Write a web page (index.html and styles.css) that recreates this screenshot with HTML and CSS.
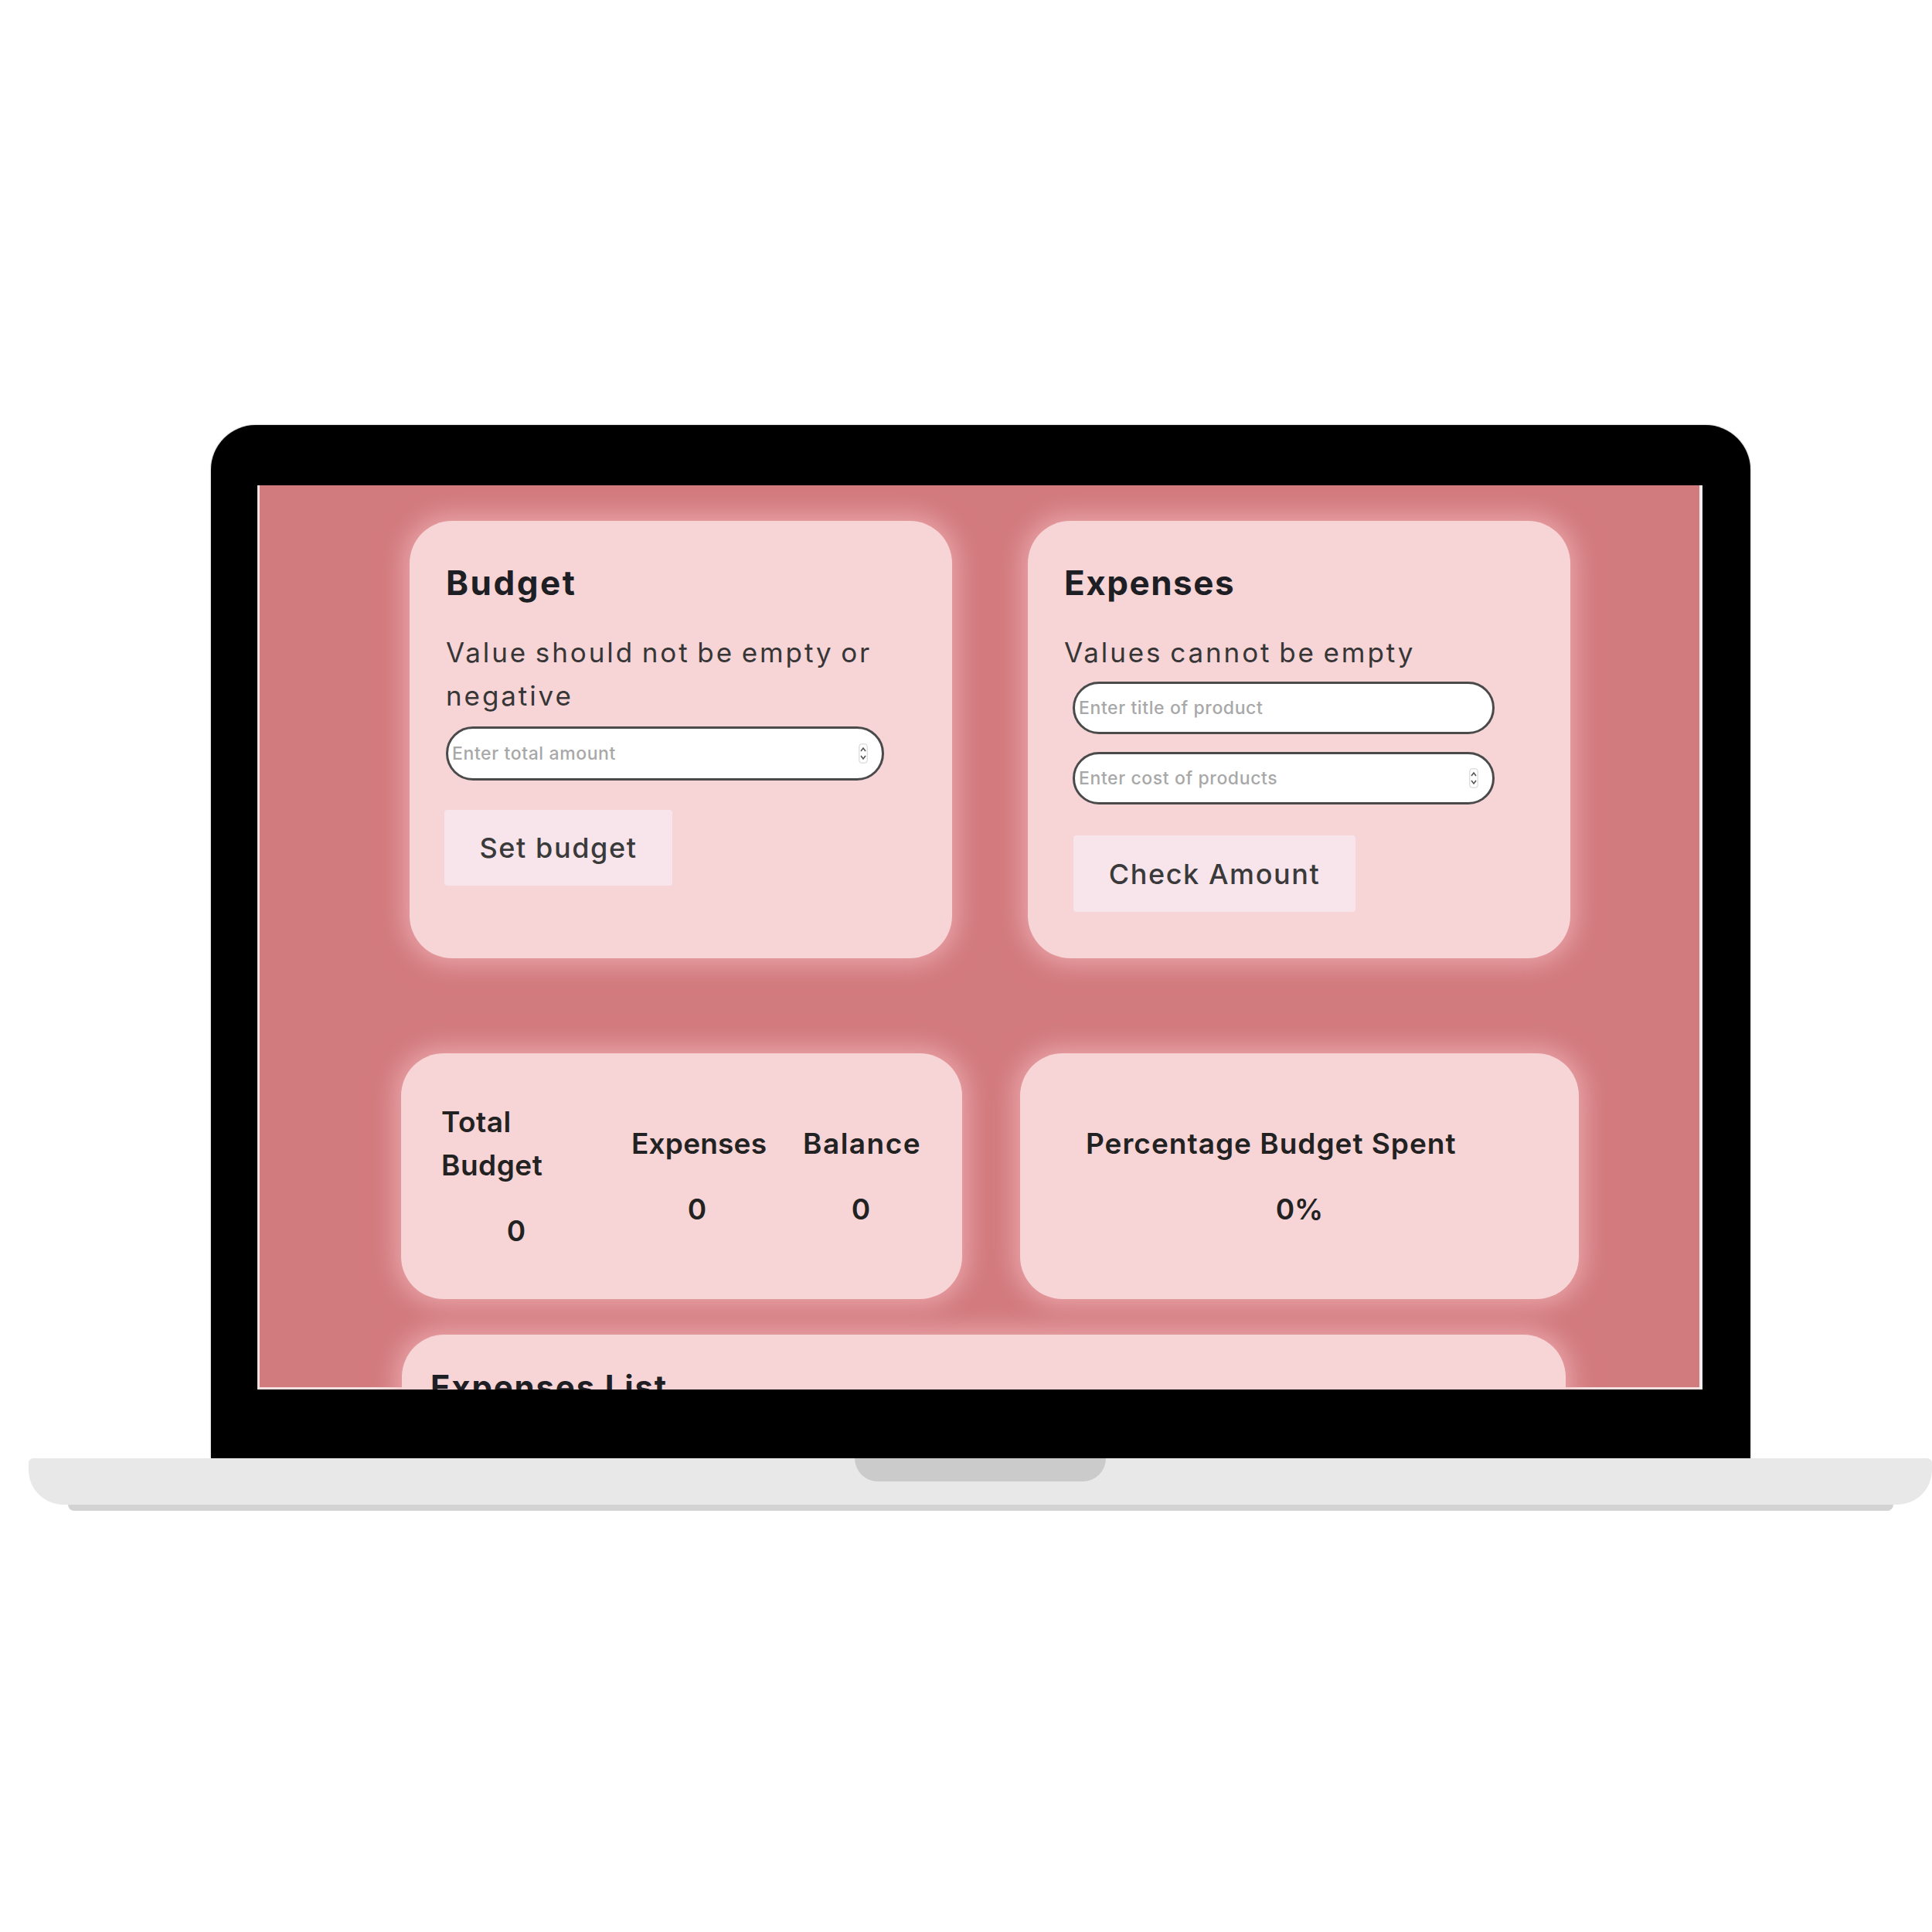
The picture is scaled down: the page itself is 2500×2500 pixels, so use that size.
FILE: index.html
```html
<!DOCTYPE html>
<html lang="en">
<head>
<meta charset="utf-8">
<title>Budget App</title>
<link rel="stylesheet" href="styles.css">
</head>
<body>
<div class="stage">
  <div class="lid">
    <div class="screen">
      <div class="row row-top">
        <section class="card card-form card-budget">
          <h2 class="card-title">Budget</h2>
          <p class="card-msg">Value should not be empty or negative</p>
          <div class="field field-budget">
            <input class="field-input" type="text" placeholder="Enter total amount">
            <svg class="spin" viewBox="0 0 12 26" width="12" height="26"><rect x="0.8" y="0.8" width="10.4" height="24.4" rx="3" fill="none" stroke="#d0d0d0" stroke-width="1"/><path d="M3 10 L6 6 L9 10" fill="none" stroke="#555" stroke-width="1.6"/><path d="M3 16 L6 20 L9 16" fill="none" stroke="#555" stroke-width="1.6"/></svg>
          </div>
          <button class="btn btn-budget">Set budget</button>
        </section>
        <section class="card card-form card-expense">
          <h2 class="card-title">Expenses</h2>
          <p class="card-msg">Values cannot be empty</p>
          <div class="field field-expense">
            <input class="field-input" type="text" placeholder="Enter title of product">
          </div>
          <div class="field field-expense field-cost">
            <input class="field-input" type="text" placeholder="Enter cost of products">
            <svg class="spin" viewBox="0 0 12 26" width="12" height="26"><rect x="0.8" y="0.8" width="10.4" height="24.4" rx="3" fill="none" stroke="#d0d0d0" stroke-width="1"/><path d="M3 10 L6 6 L9 10" fill="none" stroke="#555" stroke-width="1.6"/><path d="M3 16 L6 20 L9 16" fill="none" stroke="#555" stroke-width="1.6"/></svg>
          </div>
          <button class="btn btn-expense">Check Amount</button>
        </section>
      </div>
      <div class="row row-mid">
        <section class="card card-summary">
          <div class="stat stat-total">
            <h3 class="stat-label">Total Budget</h3>
            <p class="stat-value">0</p>
          </div>
          <div class="stat stat-expenses">
            <h3 class="stat-label">Expenses</h3>
            <p class="stat-value">0</p>
          </div>
          <div class="stat stat-balance">
            <h3 class="stat-label">Balance</h3>
            <p class="stat-value">0</p>
          </div>
        </section>
        <section class="card card-percent">
          <h3 class="stat-label percent-label">Percentage Budget Spent</h3>
          <p class="stat-value percent-value">0%</p>
        </section>
      </div>
      <section class="card card-list">
        <h3 class="list-title">Expenses List</h3>
      </section>
    </div>
  </div>
  <div class="base"><div class="notch"></div></div>
  <div class="base-shadow"></div>
</div>
</body>
</html>
```

FILE: styles.css
```css
* { box-sizing: border-box; }

html, body {
  margin: 0;
  padding: 0;
  background: #ffffff;
}

body {
  width: 2500px;
  height: 2500px;
  overflow: hidden;
  font-family: "Inter", "Open Sans", sans-serif;
  color: #222;
}

.stage {
  padding-top: 550px;
}

/* ---------- laptop ---------- */
.lid {
  margin-left: 273px;
  width: 1992px;
  height: 1337px;
  background: #000;
  border-radius: 58px 58px 0 0;
  padding: 78px 62px 89px 60px;
  box-shadow: 0 0 2px rgba(0,0,0,0.5);
}

.screen {
  width: 1870px;
  height: 1170px;
  background: #d27b7f;
  overflow: hidden;
  box-shadow: inset 3px 0 0 #f1dfe0, inset -4px 0 0 #f6eeee, inset 0 -3px 0 #f1dfe0;
  display: flex;
  flex-direction: column;
  align-items: flex-start;
}

.base {
  margin-left: 37px;
  width: 2463px;
  height: 60px;
  background: #e8e8e8;
  border-radius: 6px 6px 45px 45px;
  display: flex;
  justify-content: center;
}

.notch {
  width: 325px;
  height: 30px;
  background: #cbcbcb;
  border-radius: 0 0 30px 30px;
}

.base-shadow {
  margin-left: 88px;
  width: 2362px;
  height: 8px;
  background: #d3d3d3;
  border-radius: 0 0 8px 8px;
}

/* ---------- app ---------- */
.row {
  display: flex;
}

.row-top {
  margin-top: 46px;
  padding-left: 197px;
  gap: 98px;
}

.row-mid {
  margin-top: 123px;
  padding-left: 186px;
  gap: 75px;
}

.card {
  background: #f7d4d6;
  border-radius: 55px;
  box-shadow: 0 0 30px 8px rgba(246, 186, 190, 0.65);
}

.card-form {
  width: 702px;
  height: 566px;
  padding: 50px 0 0 47px;
  display: flex;
  flex-direction: column;
  align-items: flex-start;
}

.card-title {
  margin: 0;
  font-size: 44px;
  line-height: 60px;
  font-weight: 700;
  letter-spacing: 1.5px;
  color: #1e1f24;
}

.card-budget .card-title {
  letter-spacing: 2.5px;
}

.card-msg {
  margin: 32px 0 0;
  width: 610px;
  font-size: 35px;
  line-height: 56px;
  font-weight: 400;
  letter-spacing: 2.9px;
  word-spacing: -3px;
  color: #363636;
}

.field {
  position: relative;
  height: 70px;
  background: #fff;
  border: 3px solid #4a4a4a;
  border-radius: 35px;
  display: flex;
  align-items: center;
}

.field-budget {
  width: 567px;
  margin-top: 12px;
}

.field-expense {
  width: 546px;
  height: 68px;
  margin-top: 10px;
  margin-left: 11px;
}

.field-cost {
  margin-top: 23px;
}

.field-input {
  flex: 1;
  min-width: 0;
  height: 100%;
  border: 0;
  outline: 0;
  background: transparent;
  padding: 0 0 0 5px;
  font-family: inherit;
  font-size: 23px;
  letter-spacing: 0.6px;
  color: #333;
}

.field-input::placeholder {
  color: #a8a8a8;
  font-weight: 500;
}

.spin {
  flex: none;
  margin-right: 18px;
}

.btn {
  border: 0;
  border-radius: 4px;
  background: #f8e5ec;
  font-family: inherit;
  font-size: 36px;
  font-weight: 500;
  color: #3a3a3a;
  letter-spacing: 1.6px;
  padding: 0;
}

.btn-budget {
  width: 295px;
  height: 98px;
  margin-top: 38px;
  margin-left: -2px;
}

.btn-expense {
  width: 365px;
  height: 99px;
  margin-top: 40px;
  margin-left: 12px;
}

/* ---------- summary ---------- */
.card-summary {
  width: 726px;
  height: 318px;
  padding-left: 52px;
  display: flex;
  align-items: center;
  gap: 52px;
}

.stat {
  display: flex;
  flex-direction: column;
}

.stat-total { width: 194px; }
.stat-expenses { width: 170px; text-align: center; }
.stat-balance { width: 150px; text-align: center; }

.stat-label {
  margin: 0;
  font-size: 37px;
  line-height: 56px;
  font-weight: 600;
  letter-spacing: 0.5px;
  color: #222;
}

.stat-expenses .stat-label {
  letter-spacing: 0.2px;
}

.stat-balance .stat-label {
  letter-spacing: 1.5px;
}

.stat-value {
  margin: 29px 0 0;
  font-size: 37px;
  line-height: 56px;
  font-weight: 600;
  text-align: center;
  color: #222;
}

.card-percent {
  width: 723px;
  height: 318px;
  display: flex;
  flex-direction: column;
  justify-content: center;
}

.percent-label {
  padding-left: 85px;
  letter-spacing: 1px;
}

.card-list {
  margin-top: 46px;
  margin-left: 187px;
  width: 1506px;
  height: 300px;
  flex: none;
  padding: 40px 0 0 37px;
}

.list-title {
  margin: 0;
  font-size: 42px;
  line-height: 56px;
  font-weight: 700;
  letter-spacing: 1.8px;
  color: #1e1f24;
}
```
